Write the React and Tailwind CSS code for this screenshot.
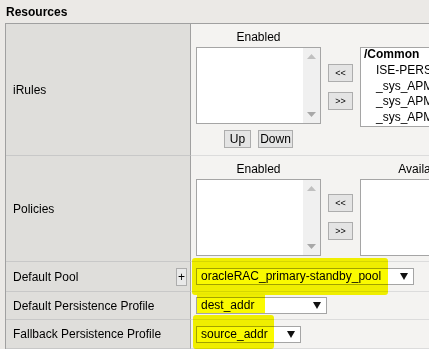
import React from "react";

function Scrollbar() {
  return (
    <div className="w-[17px] h-full bg-[#f0f0f0] flex flex-col items-center justify-between py-[6px]">
      <svg width="9" height="5" viewBox="0 0 9 5"><path d="M0 5 L4.5 0 L9 5 Z" fill="#c0c0c0" /></svg>
      <svg width="9" height="5" viewBox="0 0 9 5"><path d="M0 0 L4.5 5 L9 0 Z" fill="#a8a8a8" /></svg>
    </div>
  );
}

function Btn({ children, className = "" }) {
  return (
    <div className={`h-[18px] flex items-center justify-center border border-[#adadad] bg-[#e4e4e4] leading-none ${className}`}>
      {children}
    </div>
  );
}

function Select({ w, text }) {
  return (
    <div className={`flex items-center h-[17px] border border-[#a5a5a5] bg-white ${w}`}>
      <span className="pl-[4px] flex-1 leading-[15px] whitespace-nowrap">{text}</span>
      <svg width="8" height="7" viewBox="0 0 8 7" className="mr-[5px]"><path d="M0 0 L8 0 L4 7 Z" fill="#111" /></svg>
    </div>
  );
}

function Label({ children, h, extra }) {
  return (
    <div className={`w-[185px] shrink-0 bg-[#dfdedb] border-r border-r-[#a0a0a0] border-b border-b-[#c8c8c8] flex items-center pl-[7px] ${h}`}>
      <span className="flex-1">{children}</span>
      {extra}
    </div>
  );
}

export default function App() {
  return (
    <div className="relative w-[429px] h-[349px] overflow-hidden bg-[#ebe9e6] text-[12px] text-black font-['Liberation_Sans',Arial,sans-serif]">
      <div className="h-[23px] pl-[6px] pt-[5px] font-bold leading-[14px]">Resources</div>
      <div className="ml-[5px] w-[700px] border-l border-t border-[#a0a0a0]">
        {/* iRules */}
        <div className="flex">
          <Label h="h-[132px]">iRules</Label>
          <div className="flex-1 h-[132px] bg-[#f4f3f1] border-b border-b-[#dcdcdc] pl-[5px] pt-[6px]">
            <div className="flex items-start">
              <div className="w-[125px] flex flex-col items-center">
                <div className="h-[14px] leading-[14px]">Enabled</div>
                <div className="mt-[3px] w-[125px] h-[77px] border border-[#a5a5a5] bg-white flex justify-end">
                  <Scrollbar />
                </div>
                <div className="mt-[6px] flex gap-[7px]">
                  <Btn className="w-[27px]">Up</Btn>
                  <Btn className="w-[35px]">Down</Btn>
                </div>
              </div>
              <div className="ml-[7px] mt-[34px] flex flex-col gap-[10px]">
                <Btn className="w-[25px] text-[9px]">&lt;&lt;</Btn>
                <Btn className="w-[25px] text-[9px]">&gt;&gt;</Btn>
              </div>
              <div className="ml-[7px] w-[220px] flex flex-col items-center">
                <div className="h-[14px] leading-[14px]">Available</div>
                <div className="mt-[3px] w-[220px] h-[80px] border border-[#a5a5a5] bg-white pl-[3px] overflow-hidden">
                  <div className="-mt-[1px] leading-[15.75px] whitespace-nowrap">
                    <div className="font-bold">/Common</div>
                    <div className="pl-[12px]">ISE-PERSISTENCE</div>
                    <div className="pl-[12px]">_sys_APM_ExchangeSupport_OA</div>
                    <div className="pl-[12px]">_sys_APM_ExchangeSupport_main</div>
                    <div className="pl-[12px]">_sys_APM_activesync</div>
                  </div>
                </div>
              </div>
            </div>
          </div>
        </div>
        {/* Policies */}
        <div className="flex">
          <Label h="h-[106px]">Policies</Label>
          <div className="flex-1 h-[106px] bg-[#f4f3f1] border-b border-b-[#dcdcdc] pl-[5px] pt-[6px]">
            <div className="flex items-start">
              <div className="w-[125px] flex flex-col items-center">
                <div className="h-[14px] leading-[14px]">Enabled</div>
                <div className="mt-[3px] w-[125px] h-[77px] border border-[#a5a5a5] bg-white flex justify-end">
                  <Scrollbar />
                </div>
              </div>
              <div className="ml-[7px] mt-[32px] flex flex-col gap-[10px]">
                <Btn className="w-[25px] text-[9px]">&lt;&lt;</Btn>
                <Btn className="w-[25px] text-[9px]">&gt;&gt;</Btn>
              </div>
              <div className="ml-[7px] w-[125px] flex flex-col items-center">
                <div className="h-[14px] leading-[14px] whitespace-nowrap">Available</div>
                <div className="mt-[3px] w-[125px] h-[77px] border border-[#a5a5a5] bg-white" />
              </div>
            </div>
          </div>
        </div>
        {/* Default Pool */}
        <div className="flex">
          <Label
            h="h-[30px]"
            extra={
              <div className="mr-[3px] w-[11px] h-[18px] border border-[#adadad] bg-[#e9e9e9] flex items-center justify-center leading-none text-[12px]">+</div>
            }
          >
            Default Pool
          </Label>
          <div className="flex-1 h-[30px] bg-[#f4f3f1] border-b border-b-[#dcdcdc] pl-[5px] flex items-center">
            <Select w="w-[218px]" text="oracleRAC_primary-standby_pool" />
          </div>
        </div>
        {/* Default Persistence Profile */}
        <div className="flex">
          <Label h="h-[28px]">Default Persistence Profile</Label>
          <div className="flex-1 h-[28px] bg-[#f4f3f1] border-b border-b-[#dcdcdc] pl-[5px] flex items-center">
            <Select w="w-[131px]" text="dest_addr" />
          </div>
        </div>
        {/* Fallback Persistence Profile */}
        <div className="flex">
          <Label h="h-[29px]">Fallback Persistence Profile</Label>
          <div className="flex-1 h-[29px] bg-[#f4f3f1] border-b border-b-[#dcdcdc] pl-[5px] flex items-center">
            <Select w="w-[105px]" text="source_addr" />
          </div>
        </div>
      </div>
      {/* yellow highlighter marks */}
      <div className="absolute left-[192px] top-[258px] w-[196px] h-[37px] bg-[#fafa00] mix-blend-multiply rounded-[3px]" />
      <div className="absolute left-[197px] top-[293px] w-[68px] h-[20px] bg-[#fafa00] mix-blend-multiply" />
      <div className="absolute left-[193px] top-[315px] w-[81px] h-[34px] bg-[#fafa00] mix-blend-multiply rounded-[3px]" />
    </div>
  );
}
